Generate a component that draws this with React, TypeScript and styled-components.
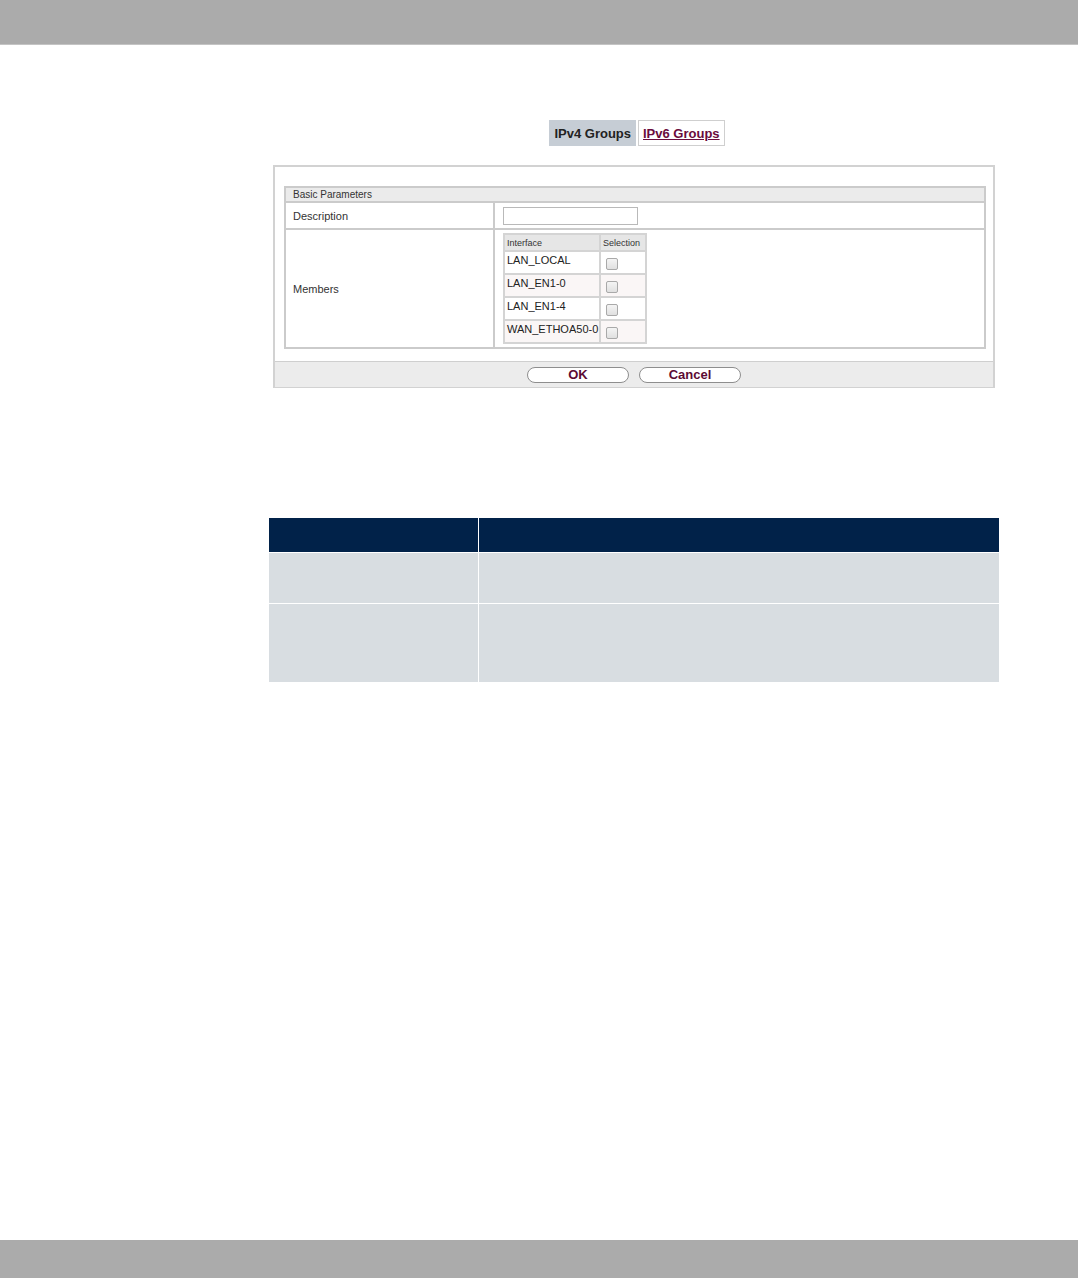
import React from "react";
import styled, { createGlobalStyle } from "styled-components";

const GlobalStyle = createGlobalStyle`
  html, body {
    margin: 0;
    padding: 0;
    background: #ffffff;
    font-family: "Liberation Sans", Arial, sans-serif;
  }
`;

const Page = styled.div`
  display: flex;
  flex-direction: column;
  height: 1278px;
`;

const TopBar = styled.div`
  height: 44px;
  background: #ababab;
  border-bottom: 1px solid #c4c4c4;
  flex-shrink: 0;
`;

const BottomBar = styled.div`
  height: 38px;
  background: #ababab;
  flex-shrink: 0;
`;

const Main = styled.main`
  flex: 1;
  display: flex;
  flex-direction: column;
  padding-left: 269px;
  width: 730px;
`;

const Tabs = styled.div`
  display: flex;
  justify-content: center;
  gap: 2px;
  margin-top: 75px;
  padding-left: 6px;
`;

const Tab = styled.a<{ $active?: boolean }>`
  display: flex;
  align-items: center;
  height: 26px;
  box-sizing: border-box;
  padding: 0 4px;
  font-size: 13px;
  font-weight: bold;
  background: ${(p) => (p.$active ? "#c6cdd5" : "#ffffff")};
  border: 1px solid ${(p) => (p.$active ? "#c6cdd5" : "#cfcfcf")};
  color: ${(p) => (p.$active ? "#222222" : "#6a0b3c")};
  text-decoration: ${(p) => (p.$active ? "none" : "underline")};
  cursor: pointer;
`;

const Panel = styled.div`
  margin: 19px 4px 0 4px;
  border: 2px solid #d2d2d2;
  border-bottom-width: 1px;
  display: flex;
  flex-direction: column;
`;

const Fieldset = styled.div`
  margin: 19px 7px 12px 9px;
  border: 2px solid #cbcbcb;
  display: flex;
  flex-direction: column;
`;

const Legend = styled.div`
  box-sizing: border-box;
  height: 15px;
  display: flex;
  align-items: center;
  padding-left: 7px;
  background: #ebebeb;
  border-bottom: 2px solid #cbcbcb;
  font-size: 10px;
  color: #333333;
`;

const FormRow = styled.div<{ $last?: boolean }>`
  display: grid;
  grid-template-columns: 209px 1fr;
  border-bottom: ${(p) => (p.$last ? "none" : "2px solid #cbcbcb")};
`;

const Label = styled.div`
  display: flex;
  align-items: center;
  padding-left: 7px;
  font-size: 11px;
  color: #333333;
  border-right: 2px solid #cbcbcb;
`;

const Value = styled.div<{ $h: number }>`
  display: flex;
  align-items: center;
  padding-left: 8px;
  height: ${(p) => p.$h}px;
`;

const TextInput = styled.input`
  width: 135px;
  height: 18px;
  box-sizing: border-box;
  border: 1px solid #b9b9b9;
  margin: 0;
  padding: 0 3px;
  font-size: 11px;
`;

const InnerTable = styled.table`
  border-collapse: collapse;
  border: 2px solid #d4d4d4;
  font-size: 11px;
  color: #222222;
`;

const Th = styled.th`
  background: #e6e6e6;
  font-weight: normal;
  font-size: 9px;
  text-align: left;
  padding: 2px 2px 1px 2px;
  border: 2px solid #d4d4d4;
  height: 12px;
  color: #333333;
`;

const Td = styled.td<{ $alt?: boolean }>`
  background: ${(p) => (p.$alt ? "#faf6f6" : "#ffffff")};
  border: 2px solid #d4d4d4;
  height: 21px;
  padding: 0 2px;
  vertical-align: top;
  text-align: left;
  white-space: nowrap;
`;

const NameCell = styled.span`
  display: block;
  width: 90px;
  padding-top: 2px;
`;

const Check = styled.span`
  display: inline-block;
  width: 10px;
  height: 10px;
  margin: 6px 25px 0 3px;
  border: 1px solid #a9a9a9;
  border-radius: 2px;
  background: linear-gradient(#f4f4f4, #e0e0e0);
`;

const ButtonBar = styled.div`
  height: 25px;
  background: #ececec;
  border-top: 1px solid #cfcfcf;
  display: flex;
  align-items: center;
  justify-content: center;
  gap: 10px;
`;

const Button = styled.button`
  width: 102px;
  height: 16px;
  border: 1px solid #8e8e8e;
  border-radius: 8px;
  background: #ffffff;
  color: #5c0a33;
  font-family: "Liberation Sans", Arial, sans-serif;
  font-weight: bold;
  font-size: 13px;
  padding: 0;
  line-height: 14px;
  cursor: pointer;
`;

const InfoTable = styled.div`
  margin-top: 130px;
  display: grid;
  grid-template-columns: 209px 1fr;
  row-gap: 1px;
  column-gap: 1px;
  background: #ffffff;
`;

const InfoHead = styled.div`
  height: 34px;
  background: #012249;
`;

const InfoCell = styled.div<{ $h: number }>`
  height: ${(p) => p.$h}px;
  background: #d8dde1;
`;

const members = ["LAN_LOCAL", "LAN_EN1-0", "LAN_EN1-4", "WAN_ETHOA50-0"];

export default function App() {
  return (
    <>
      <GlobalStyle />
      <Page>
        <TopBar />
        <Main>
          <Tabs>
            <Tab $active>IPv4 Groups</Tab>
            <Tab>IPv6 Groups</Tab>
          </Tabs>
          <Panel>
            <Fieldset>
              <Legend>Basic Parameters</Legend>
              <FormRow>
                <Label>Description</Label>
                <Value $h={25}>
                  <TextInput type="text" />
                </Value>
              </FormRow>
              <FormRow $last>
                <Label>Members</Label>
                <Value $h={117}>
                  <InnerTable>
                    <thead>
                      <tr>
                        <Th>Interface</Th>
                        <Th>Selection</Th>
                      </tr>
                    </thead>
                    <tbody>
                      {members.map((m, i) => (
                        <tr key={m}>
                          <Td $alt={i % 2 === 1}>
                            <NameCell>{m}</NameCell>
                          </Td>
                          <Td $alt={i % 2 === 1}>
                            <Check />
                          </Td>
                        </tr>
                      ))}
                    </tbody>
                  </InnerTable>
                </Value>
              </FormRow>
            </Fieldset>
            <ButtonBar>
              <Button>OK</Button>
              <Button>Cancel</Button>
            </ButtonBar>
          </Panel>
          <InfoTable>
            <InfoHead />
            <InfoHead />
            <InfoCell $h={50} />
            <InfoCell $h={50} />
            <InfoCell $h={78} />
            <InfoCell $h={78} />
          </InfoTable>
        </Main>
        <BottomBar />
      </Page>
    </>
  );
}
